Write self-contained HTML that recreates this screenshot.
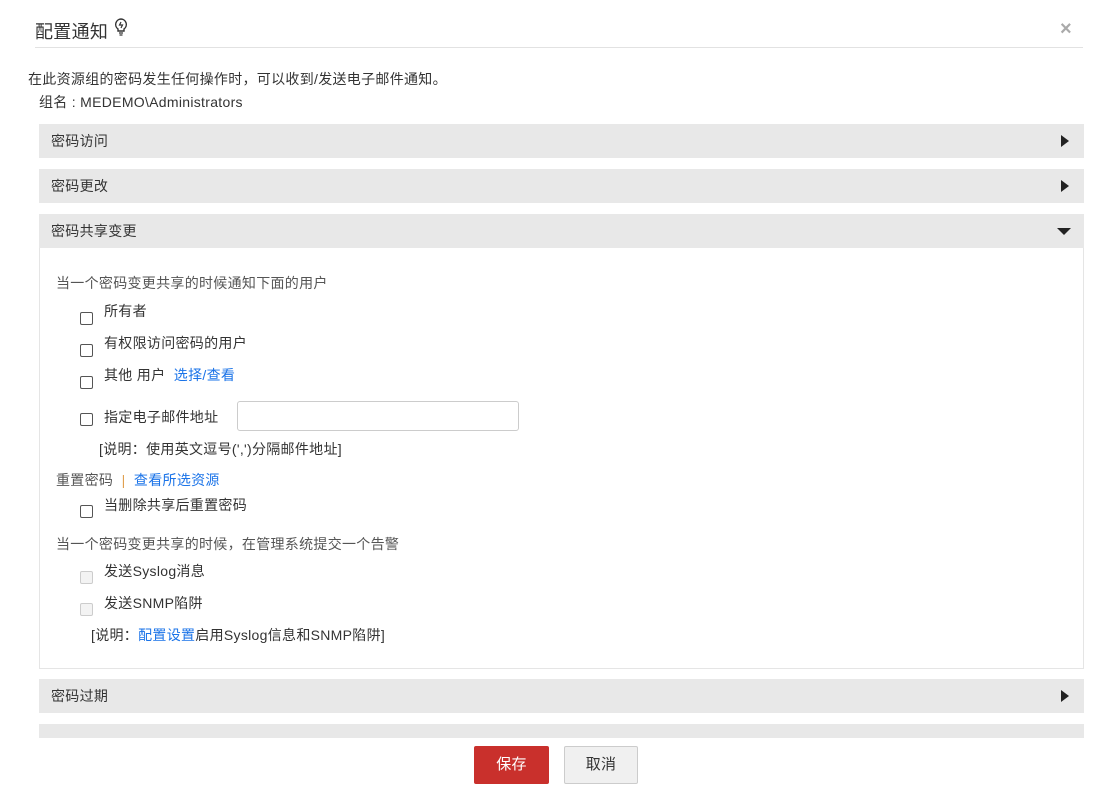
<!DOCTYPE html>
<html><head><meta charset="utf-8"><style>
*{margin:0;padding:0;box-sizing:border-box}
body{width:1119px;height:800px;background:#fff;font-family:"Liberation Sans","Noto Sans CJK SC",sans-serif;font-size:14px;color:#333;position:relative;overflow:hidden;letter-spacing:0.3px}
.a{position:absolute;white-space:nowrap}
.hd{position:absolute;left:39px;width:1045px;height:34px;background:#e8e8e8;font-size:14px;padding:7px 12px;color:#333}
.tri{position:absolute;right:15px;top:11px;width:0;height:0;border-left:8px solid #222;border-top:6px solid transparent;border-bottom:6px solid transparent}
.dn{position:absolute;right:13px;top:14px;width:0;height:0;border-top:7px solid #222;border-left:7px solid transparent;border-right:7px solid transparent}
.cb{position:absolute;left:80px;width:13px;height:13px;border:1px solid #555;border-radius:2px;background:#fff}
.cb.d{border-color:#ccc;background:#f3f3f3}
.lnk{color:#1a73e8}
</style></head><body>
<div class="a" style="left:35px;top:18px;font-size:18px;color:#333">配置通知 <svg width="14" height="18" viewBox="0 0 14 18" style="vertical-align:top;margin-top:0"><path d="M7 1a5.5 5.5 0 0 0-3 10v2h6v-2A5.5 5.5 0 0 0 7 1z" fill="none" stroke="#333" stroke-width="1.4"/><path d="M5 15h4M5.5 17h3M7 4l-1.5 3h3L7 10" fill="none" stroke="#333" stroke-width="1.2"/></svg></div>
<div class="a" style="left:1060px;top:18px;font-size:20px;color:#aaa;font-weight:bold">×</div>
<div class="a" style="left:35px;top:47px;width:1048px;height:1px;background:#e2e2e2"></div>
<div class="a" style="left:28px;top:69px">在此资源组的密码发生任何操作时，可以收到/发送电子邮件通知。</div>
<div class="a" style="left:39px;top:92px">组名 : MEDEMO\Administrators</div>
<div class="hd" style="top:124px">密码访问<div class="tri"></div></div>
<div class="hd" style="top:169px">密码更改<div class="tri"></div></div>
<div class="hd" style="top:214px">密码共享变更<div class="dn"></div></div>
<div class="a" style="left:39px;top:248px;width:1045px;height:421px;border:1px solid #e5e5e5;border-top:none"></div>
<div class="a" style="left:56px;top:273px;color:#555">当一个密码变更共享的时候通知下面的用户</div>
<div class="cb" style="top:312px"></div><div class="a" style="left:104px;top:301px">所有者</div>
<div class="cb" style="top:344px"></div><div class="a" style="left:104px;top:333px">有权限访问密码的用户</div>
<div class="cb" style="top:376px"></div><div class="a" style="left:104px;top:365px">其他 用户 &nbsp;<span class="lnk">选择/查看</span></div>
<div class="cb" style="top:413px"></div><div class="a" style="left:104px;top:407px">指定电子邮件地址</div>
<div class="a" style="left:237px;top:401px;width:282px;height:30px;border:1px solid #ccc;border-radius:3px"></div>
<div class="a" style="left:99px;top:439px">[说明：使用英文逗号(',')分隔邮件地址]</div>
<div class="a" style="left:56px;top:470px;color:#555">重置密码 &nbsp;<span style="color:#e0a050">|</span>&nbsp; <span class="lnk">查看所选资源</span></div>
<div class="cb" style="top:505px"></div><div class="a" style="left:104px;top:495px">当删除共享后重置密码</div>
<div class="a" style="left:56px;top:534px;color:#555">当一个密码变更共享的时候，在管理系统提交一个告警</div>
<div class="cb d" style="top:571px"></div><div class="a" style="left:104px;top:561px">发送Syslog消息</div>
<div class="cb d" style="top:603px"></div><div class="a" style="left:104px;top:593px">发送SNMP陷阱</div>
<div class="a" style="left:91px;top:625px">[说明：<span class="lnk">配置设置</span>启用Syslog信息和SNMP陷阱]</div>
<div class="hd" style="top:679px">密码过期<div class="tri"></div></div>
<div class="hd" style="top:724px;height:9px"></div>
<div class="a" style="left:474px;top:746px;width:75px;height:38px;background:#c9302c;color:#fff;border-radius:2px;text-align:center;line-height:38px;font-size:15px">保存</div>
<div class="a" style="left:564px;top:746px;width:74px;height:38px;background:#f0f0f0;border:1px solid #ccc;border-radius:2px;text-align:center;line-height:36px;font-size:15px">取消</div>
</body></html>
